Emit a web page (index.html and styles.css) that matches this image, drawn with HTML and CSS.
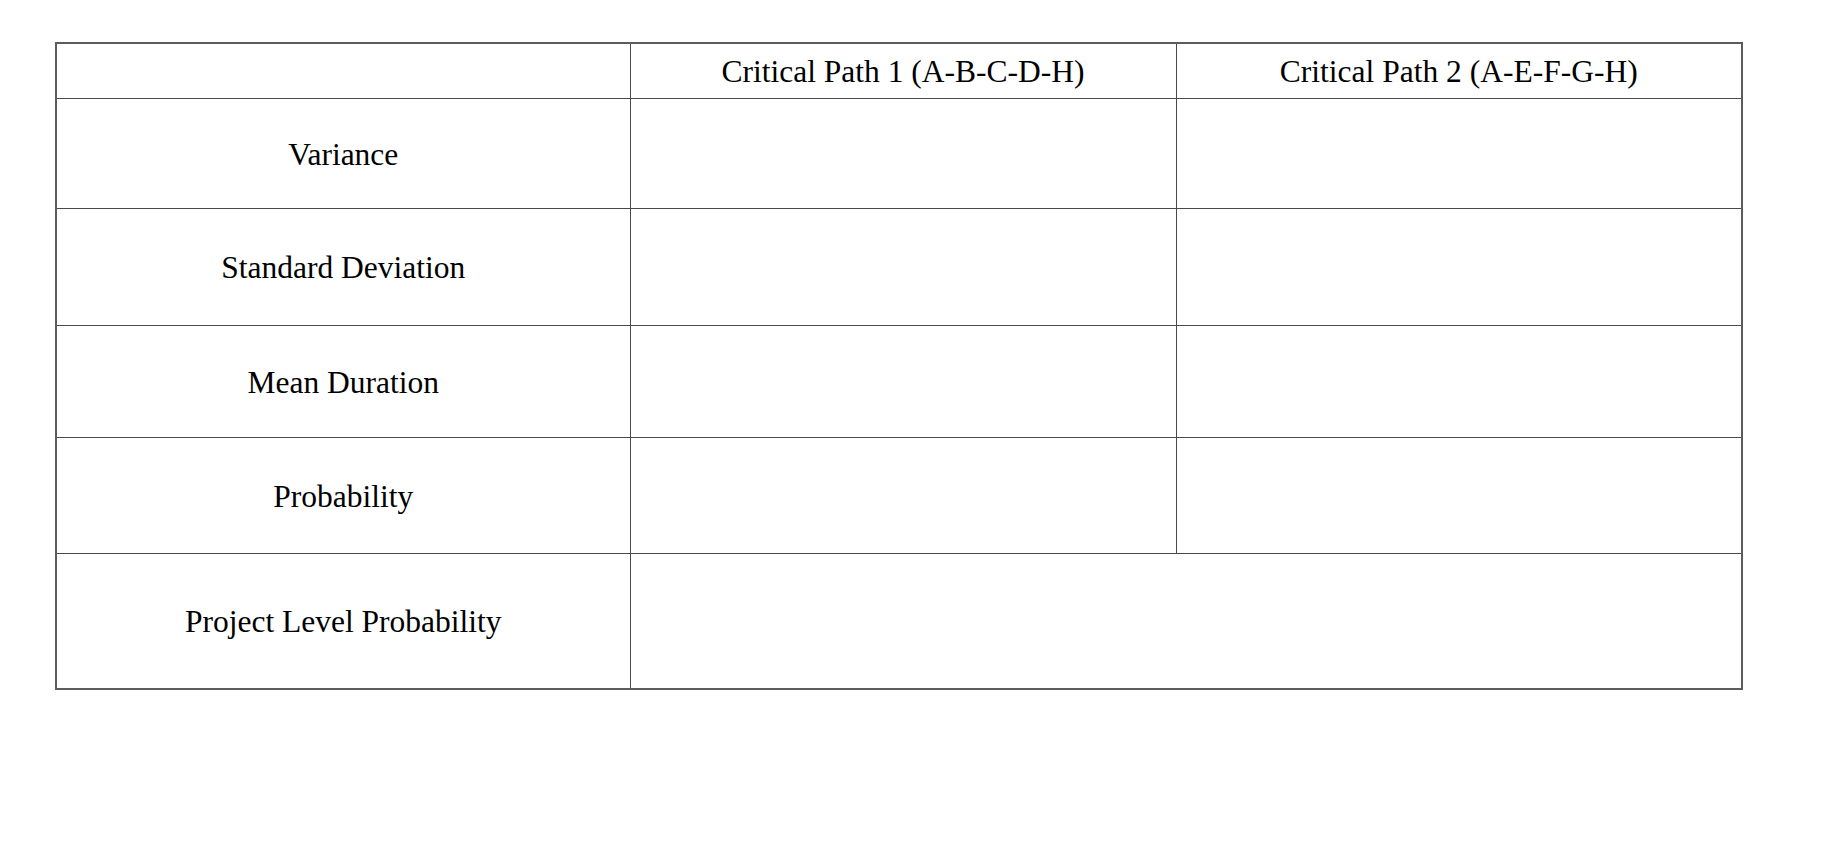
FILE: index.html
```html
<!DOCTYPE html>
<html>
<head>
<meta charset="utf-8">
<link rel="stylesheet" href="styles.css">
</head>
<body>
<table class="grid">
  <colgroup>
    <col class="c-label">
    <col class="c-path1">
    <col class="c-path2">
  </colgroup>
  <tr class="r-head">
    <td></td>
    <td>Critical Path 1 (A-B-C-D-H)</td>
    <td>Critical Path 2 (A-E-F-G-H)</td>
  </tr>
  <tr class="r-var">
    <td>Variance</td>
    <td></td>
    <td></td>
  </tr>
  <tr class="r-sd">
    <td>Standard Deviation</td>
    <td></td>
    <td></td>
  </tr>
  <tr class="r-mean">
    <td>Mean Duration</td>
    <td></td>
    <td></td>
  </tr>
  <tr class="r-prob">
    <td>Probability</td>
    <td></td>
    <td></td>
  </tr>
  <tr class="r-proj">
    <td>Project Level Probability</td>
    <td colspan="2"></td>
  </tr>
</table>
</body>
</html>
```

FILE: styles.css
```css
html, body {
  margin: 0;
  padding: 0;
  background: #ffffff;
}

body {
  padding: 42px 0 0 55px;
  font-family: "Liberation Serif", "Times New Roman", serif;
  color: #000000;
}

.grid {
  border-collapse: collapse;
  table-layout: fixed;
  width: 1686px;
  border: 2px solid #5c5c5c;
}

.c-label { width: 574px; }
.c-path1 { width: 546px; }
.c-path2 { width: 566px; }

.grid td {
  border: 1px solid #4a4a4a;
  padding: 2px 0 0 0;
  text-align: center;
  vertical-align: middle;
  font-size: 31.5px;
  line-height: 1;
  white-space: nowrap;
}

.r-head td { height: 52px; padding: 2px 0 0 0; }
.r-var td { height: 107px; }
.r-sd td { height: 114px; }
.r-mean td { height: 109px; }
.r-prob td { height: 113px; }
.r-proj td { height: 132px; }
```
